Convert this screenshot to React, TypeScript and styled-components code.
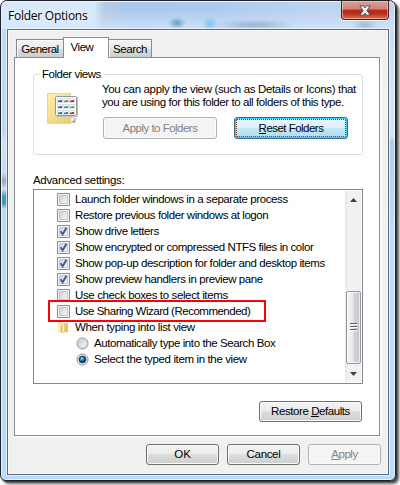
import React from 'react';
import styled, { createGlobalStyle, css } from 'styled-components';

const GlobalStyle = createGlobalStyle`
  *, *::before, *::after { box-sizing: border-box; }
  body { margin: 0; background: #fff; overflow: hidden; }
`;

const Desktop = styled.main`
  width: 400px;
  height: 485px;
  overflow: hidden;
  background: #fff;
  font-family: "Liberation Sans", Arial, sans-serif;
  font-size: 11.5px;
  color: #000;
`;

const Dialog = styled.section`
  display: flex;
  flex-direction: column;
  width: 396px;
  height: 481px;
  padding: 0 6px 5px 6px;
  border: 1px solid #1d2229;
  border-radius: 7px 7px 6px 6px;
  background:
    linear-gradient(180deg, #c3dcf8 0, #bcd6f4 130px, #cfe2f6 139px, #c5dcf3 172px, #98a6b8 180px, #cfe0f2 188px, #4d9bc2 195px, #3f93b8 202px, #b9daf7 208px, #b9dafa 100%) 0 0 / 20px 100% no-repeat,
    linear-gradient(180deg, #bdd6f3 0, #cfe2f7 60px, #d3e6f8 136px, #b0cdec 140px, #b9dafa 220px, #b9dafa 100%);
  box-shadow: inset 0 0 0 1px rgba(240, 249, 255, .85), 1px 1px 1px #333, 3px 3px 3px rgba(0, 0, 0, .65);
`;

const TitleBar = styled.header`
  display: flex;
  justify-content: space-between;
  align-items: flex-start;
  flex: none;
  height: 28px;
  margin: 0 -5px;
  padding-left: 6px;
  border-top: 1px solid #eef7ff;
  border-radius: 6px 6px 0 0;
  background:
    radial-gradient(ellipse 9px 6px at 175px 21px, rgba(75, 137, 185, .75), transparent),
    radial-gradient(ellipse 8px 8px at 208px 22px, rgba(110, 190, 235, .8), transparent),
    radial-gradient(ellipse 42px 6px at 253px 23px, rgba(90, 120, 155, .4), transparent),
    radial-gradient(ellipse 14px 6px at 363px 23px, rgba(110, 130, 155, .4), transparent),
    linear-gradient(180deg, transparent 30%, rgba(214, 231, 250, .75) 100%),
    linear-gradient(90deg, #d8e9fa 0, #d8e9fa 92px, #b8cbe3 102px, #a9c8ee 125px, #aecbee 220px, #bdd4ef 320px, #bdd4ee 100%);
`;

const Title = styled.h1`
  margin: 5px 0 0;
  font: 400 12px/18px "Open Sans", "Noto Sans", sans-serif;
  letter-spacing: -.24px;
  text-shadow: 0 0 5px #fff, 0 0 8px #fff;
`;

const CloseButton = styled.button`
  display: grid;
  place-items: center;
  width: 48px;
  height: 19px;
  margin: -1px 5px 0 0;
  padding: 0;
  border: 1px solid #5a1d22;
  border-top: 0;
  border-radius: 0 0 4px 4px;
  background: linear-gradient(#dca096 0, #d08478 45%, #b8291b 50%, #b52f1c 70%, #dd7157 100%);
  box-shadow: inset 0 0 0 1px rgba(255, 205, 190, .55), 0 1px 0 rgba(255, 255, 255, .6);
`;

const Client = styled.div`
  display: flex;
  flex-direction: column;
  flex: 1;
  padding: 7px 6px 0;
  border: 1px solid #5a6b7c;
  background: #f0f0f0;
  box-shadow: 0 0 0 1px rgba(235, 246, 255, .8), inset 0 0 0 1px #f8f8f8;
`;

const Tabs = styled.nav`
  display: flex;
  align-items: flex-end;
  height: 20px;
  padding-left: 2px;
`;

const Tab = styled.button<{ $width: number; $active?: boolean; $last?: boolean; $spacing: number }>`
  flex: none;
  width: ${p => p.$width}px;
  height: 18px;
  padding: 1px 0 0;
  border: 1px solid #898c95;
  border-left-width: ${p => (p.$last ? 0 : 1)}px;
  border-bottom: 0;
  background: linear-gradient(#f3f3f3 0, #ebebeb 50%, #dddddd 51%, #cdcdcd 100%);
  box-shadow: inset 1px 1px 0 #fbfbfb;
  font: inherit;
  line-height: 17px;
  letter-spacing: ${p => p.$spacing}px;
  color: #000;
  ${p => p.$active && css`
    z-index: 1;
    height: 21px;
    margin: 0 0 -1px -1px;
    padding: 0 8px 2px 0;
    background: #fff;
    box-shadow: none;
  `}
`;

const TabPanel = styled.div`
  display: flex;
  flex-direction: column;
  width: 366px;
  height: 379px;
  padding: 9px 17px 0 18px;
  border: 1px solid #898c95;
  background: #fff;
  box-shadow: 2px 2px 0 #f9f9f9;
`;

const Label = styled.span<{ $spacing: number }>`
  white-space: pre;
  letter-spacing: ${p => p.$spacing}px;
`;

const GroupBox = styled.fieldset`
  display: flex;
  gap: 23px;
  flex: none;
  height: 88px;
  margin: 0;
  width: 330px;
  min-width: 0;
  padding: 0 0 0 13px;
  border: 1px solid #d5dfe5;
  border-radius: 3px;
`;

const Legend = styled.legend`
  height: 14px;
  margin-left: -7px;
  padding: 0 2px;
  line-height: 14px;
`;

const ViewsIcon = styled.svg`
  flex: none;
  margin-top: 12px;
`;

const Views = styled.div`
  display: flex;
  flex-direction: column;
  padding-top: 2px;
`;

const Description = styled.p`
  display: flex;
  flex-direction: column;
  margin: 0;
  line-height: 13px;
`;

const ButtonRow = styled.div`
  display: flex;
  gap: 17px;
  margin: 8px 0 0 1px;
`;

const PushButton = styled.button<{ $width: number; $height?: number; $spacing: number; $look?: 'disabled' | 'focused' }>`
  flex: none;
  width: ${p => p.$width}px;
  height: ${p => p.$height ?? 21}px;
  padding: 0;
  border: 1px solid #707070;
  border-radius: 3px;
  background: linear-gradient(#f3f3f3 0, #ebebeb 48%, #dcdcdc 51%, #cecece 100%);
  box-shadow: inset 0 0 0 1px #fafafa;
  font: inherit;
  line-height: 19px;
  letter-spacing: ${p => p.$spacing}px;
  color: #000;
  ${p => p.$look === 'disabled' && css`
    border-color: #adb2b5;
    background: #f4f4f4;
    color: #838383;
  `}
  ${p => p.$look === 'focused' && css`
    border-color: #2f7197;
    background: linear-gradient(#edf7fc 0, #dceffa 48%, #c6e6f7 51%, #abdcf4 100%);
    box-shadow: inset 0 0 0 1px #36cbf5;
    outline: 1px dotted #7e3d28;
    outline-offset: -3px;
  `}
`;

const Mnemonic = styled.span`
  box-shadow: 0 -1px 0 currentColor inset;
`;

const ListHeading = styled.h2`
  flex: none;
  margin: 18px 0 1px;
  font: inherit;
  line-height: 15px;
`;

const ListFrame = styled.div`
  display: flex;
  flex: none;
  justify-content: space-between;
  width: 330px;
  height: 195px;
  padding: 1px;
  border: 1px solid #828790;
`;

const List = styled.div`
  padding: 0 0 0 22px;
`;

const Row = styled.div<{ $nested?: boolean; $framed?: boolean }>`
  display: grid;
  grid-template-columns: 13px max-content;
  column-gap: 5px;
  align-items: center;
  height: 16px;
  padding-left: ${p => (p.$nested ? 19 : 0)}px;
  line-height: 16px;
  ${p => p.$framed && css`
    position: relative;
    &::after {
      content: '';
      position: absolute;
      left: -9px;
      top: -3px;
      width: 218px;
      height: 22px;
      border: 2px solid #fb0007;
    }
  `}
`;

const ScrollBar = styled.div`
  display: flex;
  flex-direction: column;
  align-items: center;
  width: 16px;
  background: linear-gradient(90deg, #e9e9e9, #f2f2f2 30%, #f0f0f0);
`;

const ScrollArrow = styled.svg`
  flex: none;
`;

const ScrollTrack = styled.div`
  flex: 1;
`;

const ScrollThumb = styled.div`
  display: grid;
  place-items: center;
  width: 15px;
  height: 73px;
  border: 1px solid #979797;
  border-radius: 2px;
  background: linear-gradient(90deg, #f5f5f5 0, #e9e9eb 48%, #d5d6d9 52%, #c4c5c9 100%);
  box-shadow: inset 0 0 0 1px rgba(255, 255, 255, .7);
`;

const PanelFooter = styled.div`
  display: flex;
  justify-content: flex-end;
  margin: 17px 0 0;
`;

const DialogFooter = styled.footer`
  display: flex;
  justify-content: flex-end;
  gap: 8px;
  padding: 8px 1px 0 0;
`;

const CheckBox = ({ checked }: { checked?: boolean }) => (
  <svg width="13" height="13" viewBox="0 0 13 13">
    <defs>
      <linearGradient id="box" x1="0" y1="0" x2="1" y2="1">
        <stop offset="0" stopColor="#c9cdd3" />
        <stop offset="1" stopColor="#f8f8f8" />
      </linearGradient>
    </defs>
    <path d="M.5.5h12v12H.5z" fill="#f4f4f4" stroke="#8e8f8f" />
    <path d="M2.5 2.5h8v8h-8z" fill="url(#box)" stroke="#c3c7ce" />
    {checked && <path d="M3.6 6.3 5.7 9.2 9.5 2.8" fill="none" stroke="#41579b" strokeWidth="1.9" />}
  </svg>
);

const Radio = ({ checked }: { checked?: boolean }) => (
  <svg width="13" height="13" viewBox="0 0 13 13">
    <defs>
      <radialGradient id="bead" cx=".4" cy=".35" r=".6">
        <stop offset="0" stopColor="#8fe3fb" />
        <stop offset=".5" stopColor="#1a7db0" />
        <stop offset="1" stopColor="#0b2f4c" />
      </radialGradient>
    </defs>
    <circle cx="6.5" cy="6.5" r="5.5" fill="#f6f6f6" stroke="#8a8c8e" />
    <circle cx="6.5" cy="6.5" r="4" fill="url(#box)" stroke="#c4c8cc" strokeWidth=".8" />
    {checked && <circle cx="6.5" cy="6.5" r="3.3" fill="url(#bead)" stroke="#12304c" strokeWidth=".9" />}
  </svg>
);

const SmallFolder = () => (
  <svg width="13" height="13" viewBox="0 0 13 13">
    <path d="M1 1h4l1 1v9l-2 1-3-1z" fill="#f5e4a2" />
    <path d="M5.5 3 10 1.5l1 1V11l-5.5 1z" fill="#e8cd74" />
    <path d="M2 1.5v9.5M6.5 3.5V11" stroke="#fff4bd" />
    <path d="M4.5 5v6.5M9.5 5v6" stroke="#d9b855" />
  </svg>
);

const TILE_COLORS = ['#356b91', '#6b9a46', '#b8352b', '#36688b', '#4b91b0', '#79a749', '#27816e', '#5877a8', '#ba3e2c'];

const FolderViewsGlyph = () => (
  <ViewsIcon width="32" height="33" viewBox="0 0 32 33">
    <defs>
      <linearGradient id="paper" x1="0" y1="0" x2="1" y2="1">
        <stop offset="0" stopColor="#fff0a6" />
        <stop offset="1" stopColor="#e9cc70" />
      </linearGradient>
    </defs>
    <path d="M24 25h6l-2 6-4-2z" fill="#c9ccd0" />
    <path d="M.5.5h23v30H.5z" fill="url(#paper)" stroke="#ecd784" />
    <path d="M24 24v6l3-3v-3z" fill="#fff" stroke="#d9bd65" strokeWidth=".7" />
    <path d="M25 29l2-2 1 2z" fill="#4aa0e0" />
    <rect x="8.5" y="3.5" width="21" height="19" rx="1" fill="#fff" stroke="#92979b" />
    <path d="M9 23.5h21.5V4" fill="none" stroke="#bfc2c4" />
    {TILE_COLORS.map((color, i) => {
      const x = 10 + (i % 3) * 6;
      const y = 5 + Math.floor(i / 3) * 6;
      return (
        <g key={i}>
          <rect x={x + 0.5} y={y + 0.5} width="5" height="4" fill="#fff" stroke="#dde0e4" />
          <rect x={x + 1} y={y + 2} width="4" height="2" fill={color} />
          <rect x={x + 1} y={y + 2} width="2" height="1" fill="#fff" opacity=".45" />
        </g>
      );
    })}
  </ViewsIcon>
);

type Kind = 'check' | 'radio' | 'folder';
interface Setting { text: string; spacing: number; kind: Kind; checked?: boolean; framed?: boolean }

const SETTINGS: Setting[] = [
  { text: 'Launch folder windows in a separate process', spacing: -0.403, kind: 'check' },
  { text: 'Restore previous folder windows at logon', spacing: -0.426, kind: 'check' },
  { text: 'Show drive letters', spacing: -0.422, kind: 'check', checked: true },
  { text: 'Show encrypted or compressed NTFS files in color', spacing: -0.428, kind: 'check', checked: true },
  { text: 'Show pop-up description for folder and desktop items', spacing: -0.421, kind: 'check', checked: true },
  { text: 'Show preview handlers in preview pane', spacing: -0.401, kind: 'check', checked: true },
  { text: 'Use check boxes to select items', spacing: -0.37, kind: 'check' },
  { text: 'Use Sharing Wizard (Recommended)', spacing: -0.493, kind: 'check', framed: true },
  { text: 'When typing into list view', spacing: -0.358, kind: 'folder' },
  { text: 'Automatically type into the Search Box', spacing: -0.41, kind: 'radio' },
  { text: 'Select the typed item in the view', spacing: -0.368, kind: 'radio', checked: true },
];

const SettingRow = ({ text, spacing, kind, checked, framed }: Setting) => (
  <Row $nested={kind === 'radio'} $framed={framed}>
    {kind === 'check' && <CheckBox checked={checked} />}
    {kind === 'radio' && <Radio checked={checked} />}
    {kind === 'folder' && <SmallFolder />}
    <Label $spacing={spacing}>{text}</Label>
  </Row>
);

export default function App() {
  return (
    <>
      <GlobalStyle />
      <Desktop>
        <Dialog>
          <TitleBar>
            <Title>Folder Options</Title>
            <CloseButton aria-label="Close">
              <svg width="12" height="11" viewBox="0 0 12 11">
                <path d="M.9.8h3.7L6 2.9 7.4.8h3.7L8 5.5l3.1 4.7H7.4L6 8.1l-1.4 2.1H.9L4 5.5z" fill="#f7f7f7" stroke="#4c5264" />
              </svg>
            </CloseButton>
          </TitleBar>
          <Client>
            <Tabs>
              <Tab $width={48} $spacing={-0.516}>General</Tab>
              <Tab $width={46} $spacing={-0.48} $active>View</Tab>
              <Tab $width={43} $spacing={-0.44} $last>Search</Tab>
            </Tabs>
            <TabPanel>
              <GroupBox>
                <Legend><Label $spacing={-0.479}>Folder views</Label></Legend>
                <FolderViewsGlyph />
                <Views>
                  <Description>
                    <Label $spacing={-0.346}>You can apply the view (such as Details or Icons) that</Label>
                    <Label $spacing={-0.415}>you are using for this folder to all folders of this type.</Label>
                  </Description>
                  <ButtonRow>
                    <PushButton $width={114} $height={22} $spacing={-0.518} $look="disabled">
                      Apply to Fo<Mnemonic>l</Mnemonic>ders
                    </PushButton>
                    <PushButton $width={114} $height={22} $spacing={-0.521} $look="focused">
                      <Mnemonic>R</Mnemonic>eset Folders
                    </PushButton>
                  </ButtonRow>
                </Views>
              </GroupBox>
              <ListHeading><Label $spacing={-0.326}>Advanced settings:</Label></ListHeading>
              <ListFrame>
                <List>
                  {SETTINGS.map(setting => <SettingRow key={setting.text} {...setting} />)}
                </List>
                <ScrollBar>
                  <ScrollArrow width="15" height="17" viewBox="0 0 15 17">
                    <path d="M4 11 7.5 7l3.5 4z" fill="#3f4247" />
                  </ScrollArrow>
                  <ScrollTrack />
                  <ScrollThumb>
                    <svg width="7" height="9" viewBox="0 0 7 9">
                      <path d="M0 .5h7M0 3.5h7M0 6.5h7" stroke="#5c5f66" />
                      <path d="M0 1.5h7M0 4.5h7M0 7.5h7" stroke="#fff" />
                    </svg>
                  </ScrollThumb>
                  <ScrollArrow width="15" height="18" viewBox="0 0 15 18">
                    <path d="M4 8 7.5 12 11 8z" fill="#3f4247" />
                  </ScrollArrow>
                </ScrollBar>
              </ListFrame>
              <PanelFooter>
                <PushButton $width={103} $spacing={-0.428}>
                  Restore <Mnemonic>D</Mnemonic>efaults
                </PushButton>
              </PanelFooter>
            </TabPanel>
            <DialogFooter>
              <PushButton $width={73} $spacing={-0.158}>OK</PushButton>
              <PushButton $width={73} $spacing={-0.332}>Cancel</PushButton>
              <PushButton $width={73} $spacing={-0.49} $look="disabled"><Mnemonic>A</Mnemonic>pply</PushButton>
            </DialogFooter>
          </Client>
        </Dialog>
      </Desktop>
    </>
  );
}
